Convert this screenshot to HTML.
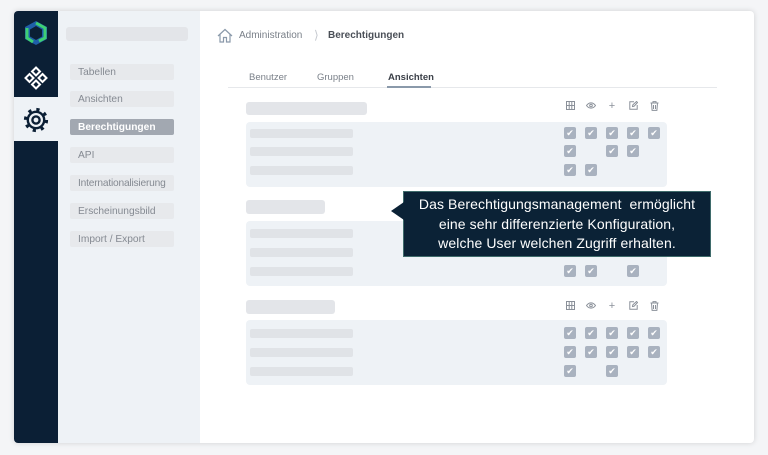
<!DOCTYPE html>
<html><head><meta charset="utf-8"><style>
*{margin:0;padding:0;box-sizing:border-box}
body{width:768px;height:455px;background:#f4f5f7;font-family:"Liberation Sans",sans-serif;position:relative;overflow:hidden}
.a{position:absolute}
.card{left:14px;top:11px;width:740px;height:432px;background:#fff;border-radius:4px;box-shadow:0 0 6px rgba(0,0,0,.15);overflow:hidden}
.ph{background:#e3e5e9;border-radius:3px}
.item{left:70px;width:104px;height:16px;background:#e7e9ec;border-radius:2px;font-size:10.2px;color:#858a92;padding-left:8px;line-height:17px;white-space:nowrap}
.box{left:246px;width:421px;height:65px;background:#eef2f6;border-radius:4px}
.rp{left:250px;width:103px;height:9px;background:#e0e3e7;border-radius:2px}
.cb{width:12px;height:12px;background:#a9b2bf;border-radius:2px;color:#fff;font-size:9px;line-height:12px;text-align:center}
.ic{font-size:9px;color:#8a9099;text-align:center;width:12px}
</style></head><body>
<div class="a card"></div>
<div class="a" style="left:14px;top:11px;width:44px;height:432px;background:#0b1f35;border-radius:4px 0 0 4px"></div>
<div class="a" style="left:14px;top:97px;width:44px;height:44px;background:#eef2f6"></div>
<svg class="a" style="left:22px;top:19px" width="28" height="28" viewBox="0 0 28 28"><polygon points="14,2 25,8 25,20 14,26 3,20 3,8" fill="#1f5fa8"/><polygon points="14,7 20,10.5 20,17.5 14,21 8,17.5 8,10.5" fill="#0b1f35"/><path d="M14,4 L23,9 L23,19 L17,22 M11,23 L5,19 L5,9" stroke="#3ecf73" stroke-width="3" fill="none"/></svg>
<svg class="a" style="left:23px;top:65px" width="26" height="26" viewBox="0 0 26 26" fill="none" stroke="#fff" stroke-width="2"><path d="M13 2.5l4 4-4 4-4-4z"/><path d="M6.5 9l4 4-4 4-4-4z"/><path d="M19.5 9l4 4-4 4-4-4z"/><path d="M13 15.5l4 4-4 4-4-4z"/></svg>
<svg class="a" style="left:23px;top:107px" width="26" height="26" viewBox="0 0 26 26" fill="none" stroke="#0b1f35"><circle cx="13" cy="13" r="10.5" stroke-width="3.2" stroke-dasharray="3.2 5.05"/><circle cx="13" cy="13" r="8.2" stroke-width="2.4" fill="#eef2f6"/><circle cx="13" cy="13" r="3.6" stroke-width="2.4"/></svg>
<div class="a" style="left:58px;top:11px;width:142px;height:432px;background:#eef2f6"></div>
<div class="a ph" style="left:66px;top:27px;width:122px;height:14px"></div>
<div class="a item" style="top:64px">Tabellen</div>
<div class="a item" style="top:91px">Ansichten</div>
<div class="a item" style="top:119px;background:#a2a8b1;color:#fff;font-weight:bold">Berechtigungen</div>
<div class="a item" style="top:147px">API</div>
<div class="a item" style="top:175px;letter-spacing:-.2px">Internationalisierung</div>
<div class="a item" style="top:203px">Erscheinungsbild</div>
<div class="a item" style="top:231px">Import / Export</div>
<svg class="a" style="left:217px;top:28px" width="16" height="15" viewBox="0 0 16 15" fill="none" stroke="#8a99aa" stroke-width="1.2"><path d="M1 8L8 1.5 15 8M3 6.5V14h3.5V9.5h3V14H13V6.5"/></svg>
<div class="a" style="left:239px;top:30px;font-size:10px;color:#7a8089">Administration</div>
<div class="a" style="left:314px;top:28px;font-size:12px;color:#c5c9cf">⟩</div>
<div class="a" style="left:328px;top:30px;font-size:10px;color:#4a4f57;font-weight:bold">Berechtigungen</div>
<div class="a" style="left:249px;top:72px;font-size:9.5px;color:#7a8089">Benutzer</div>
<div class="a" style="left:317px;top:72px;font-size:9.5px;color:#7a8089">Gruppen</div>
<div class="a" style="left:388px;top:72px;font-size:9.5px;color:#3a3f47;font-weight:bold">Ansichten</div>
<div class="a" style="left:228px;top:87px;width:489px;height:1px;background:#e6e8eb"></div>
<div class="a" style="left:387px;top:86px;width:44px;height:2px;background:#8a99aa"></div>

<div class="a ph" style="left:246px;top:102px;width:121px;height:13px"></div>
<div class="a ph" style="left:246px;top:200px;width:79px;height:14px"></div>
<div class="a ph" style="left:246px;top:300px;width:89px;height:14px"></div>
<div class="a box" style="top:122px"></div>
<div class="a box" style="top:221px"></div>
<div class="a box" style="top:320px"></div>
<div id="g"></div>
<script>
var h='';
function ic(y){for(var i=0;i<5;i++)h+='<div class="a ic" style="left:'+(564+i*21)+'px;top:'+(y-6)+'px">'+['<svg width="9" height="9" viewBox="0 0 9 9" fill="none" stroke="#8a9099"><rect x=".5" y=".5" width="8" height="8"/><path d="M3.2 .5v8M5.8 .5v8M.5 4.5h8"/></svg>','<svg width="10" height="9" viewBox="0 0 10 9" fill="none" stroke="#8a9099"><path d="M.5 4.5C3 1 7 1 9.5 4.5 7 8 3 8 .5 4.5z"/><circle cx="5" cy="4.5" r="1.3"/></svg>','<span style="font-size:11px;line-height:9px">+</span>','<svg width="9" height="9" viewBox="0 0 9 9" fill="none" stroke="#8a9099"><path d="M5 .8H.8v7.5h7.4V4M3.5 5.5l.3-1.6L7.5.5l1 1-3.5 3.8z"/></svg>','<svg width="9" height="10" viewBox="0 0 9 10" fill="none" stroke="#8a9099"><path d="M.5 2h8M3 2V.6h3V2M1.5 2l.6 7.4h4.8L7.5 2M3.5 4v4M5.5 4v4"/></svg>'][i]+'</div>';}
ic(107);ic(307);
function row(y,cols,ph){if(ph)h+='<div class="a rp" style="top:'+(y-4)+'px"></div>';cols.forEach(function(c){h+='<div class="a cb" style="left:'+(564+(c-1)*21)+'px;top:'+(y-6)+'px">✔</div>';});}
row(133,[1,2,3,4,5],1);row(151,[1,3,4],1);row(170,[1,2],1);
row(233,[],1);row(252,[],1);row(271,[1,2,4],1);
row(333,[1,2,3,4,5],1);row(352,[1,2,3,4,5],1);row(371,[1,3],1);
document.getElementById('g').innerHTML=h;
</script>
<div class="a" style="left:403px;top:191px;width:308px;height:66px;background:#0b2236;border:1px solid #3f6b6b"></div>
<div class="a" style="left:391px;top:202px;width:0;height:0;border-top:9px solid transparent;border-bottom:9px solid transparent;border-right:13px solid #0b2236"></div>
<div class="a" style="left:403px;top:195px;width:308px;text-align:center;color:#fff;font-size:14px;line-height:19.5px;letter-spacing:.1px">Das Berechtigungsmanagement&nbsp; ermöglicht<br>eine sehr differenzierte Konfiguration,<br>welche User welchen Zugriff erhalten.</div>
</body></html>
